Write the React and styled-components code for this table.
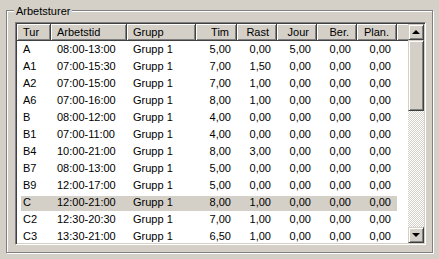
import React from "react";
import styled, { createGlobalStyle } from "styled-components";

const GlobalStyle = createGlobalStyle`
  html, body {
    margin: 0;
    padding: 0;
    background: #d4d0c8;
    font-family: "Liberation Sans", Arial, sans-serif;
    font-size: 11px;
    color: #000;
  }
  #root {
    width: 439px;
    height: 259px;
    overflow: hidden;
  }
`;

const COLS = [
  { key: "tur", title: "Tur", width: 34, align: "left" },
  { key: "tid", title: "Arbetstid", width: 76, align: "left" },
  { key: "grupp", title: "Grupp", width: 69, align: "left" },
  { key: "tim", title: "Tim", width: 41, align: "right" },
  { key: "rast", title: "Rast", width: 40, align: "right" },
  { key: "jour", title: "Jour", width: 40, align: "right" },
  { key: "ber", title: "Ber.", width: 40, align: "right" },
  { key: "plan", title: "Plan.", width: 40, align: "right" },
];

const rows = [
  ["A", "08:00-13:00", "Grupp 1", "5,00", "0,00", "5,00", "0,00", "0,00"],
  ["A1", "07:00-15:30", "Grupp 1", "7,00", "1,50", "0,00", "0,00", "0,00"],
  ["A2", "07:00-15:00", "Grupp 1", "7,00", "1,00", "0,00", "0,00", "0,00"],
  ["A6", "07:00-16:00", "Grupp 1", "8,00", "1,00", "0,00", "0,00", "0,00"],
  ["B", "08:00-12:00", "Grupp 1", "4,00", "0,00", "0,00", "0,00", "0,00"],
  ["B1", "07:00-11:00", "Grupp 1", "4,00", "0,00", "0,00", "0,00", "0,00"],
  ["B4", "10:00-21:00", "Grupp 1", "8,00", "3,00", "0,00", "0,00", "0,00"],
  ["B7", "08:00-13:00", "Grupp 1", "5,00", "0,00", "0,00", "0,00", "0,00"],
  ["B9", "12:00-17:00", "Grupp 1", "5,00", "0,00", "0,00", "0,00", "0,00"],
  ["C", "12:00-21:00", "Grupp 1", "8,00", "1,00", "0,00", "0,00", "0,00"],
  ["C2", "12:30-20:30", "Grupp 1", "7,00", "1,00", "0,00", "0,00", "0,00"],
  ["C3", "13:30-21:00", "Grupp 1", "6,50", "1,00", "0,00", "0,00", "0,00"],
];

const SELECTED = 9;

function App() {
  return (
    <>
      <GlobalStyle />
      <GroupBox>
        <GroupLabel>Arbetsturer</GroupLabel>
        <ListView>
          <Content>
            <Header>
              {COLS.map((c) => (
                <HeaderCell key={c.key} align={c.align}>
                  {c.title}
                </HeaderCell>
              ))}
              <HeaderCell />
            </Header>
            <Body>
              {rows.map((r, i) => (
                <Row key={r[0]} selected={i === SELECTED}>
                  {r.map((v, j) => (
                    <Cell key={j} align={COLS[j].align} first={j === 0}>
                      {v}
                    </Cell>
                  ))}
                </Row>
              ))}
            </Body>
          </Content>
          <ScrollBar>
            <ArrowButton>
              <Arrow up />
            </ArrowButton>
            <Thumb />
            <Track />
            <ArrowButton>
              <Arrow />
            </ArrowButton>
          </ScrollBar>
        </ListView>
      </GroupBox>
    </>
  );
}

const GroupBox = styled.div`
  position: relative;
  margin: 10px 0 0 6px;
  width: 427px;
  height: 243px;
  box-sizing: border-box;
  border: 1px solid #808080;
  box-shadow: inset 1px 1px 0 #fff, 1px 1px 0 #fff;
  padding: 11px 0 0 8px;
`;

const GroupLabel = styled.div`
  position: absolute;
  top: -6px;
  left: 7px;
  padding: 0 2px;
  line-height: 13px;
  background: #d4d0c8;
`;

const ListView = styled.div`
  display: flex;
  width: 411px;
  height: 223px;
  box-sizing: border-box;
  border: 1px solid;
  border-color: #808080 #fff #fff #808080;
  box-shadow: inset 1px 1px 0 #404040, inset -1px -1px 0 #d4d0c8;
  padding: 1px;
  background: #fff;
`;

const Content = styled.div`
  flex: 1;
  display: flex;
  flex-direction: column;
  overflow: hidden;
`;

const Header = styled.div`
  display: grid;
  grid-template-columns: ${COLS.map((c) => c.width + "px").join(" ")} 11px;
  height: 17px;
  flex-shrink: 0;
`;

const HeaderCell = styled.div`
  box-sizing: border-box;
  background: #d4d0c8;
  border-right: 1px solid #404040;
  border-bottom: 1px solid #404040;
  box-shadow: inset 1px 1px 0 #fff, inset -1px -1px 0 #808080;
  padding: 0 7px 0 6px;
  line-height: 16px;
  text-align: ${(p) => p.align || "left"};
  white-space: nowrap;
  overflow: hidden;
`;

const Body = styled.div`
  flex: 1;
  overflow: hidden;
`;

const Row = styled.div`
  display: grid;
  grid-template-columns: 30px ${COLS.slice(1)
      .map((c) => c.width + "px")
      .join(" ")};
  width: 376px;
  margin-left: 4px;
  height: 17px;
  line-height: 17px;
  background: ${(p) =>
    p.selected
      ? "linear-gradient(transparent 2px, #d4d0c8 2px)"
      : "transparent"};
`;

const Cell = styled.div`
  padding: ${(p) => (p.first ? "0 0 0 2px" : p.align === "right" ? "0 6px 0 0" : "0 0 0 6px")};
  text-align: ${(p) => p.align};
  white-space: nowrap;
  overflow: hidden;
`;

const ScrollBar = styled.div`
  width: 16px;
  display: flex;
  flex-direction: column;
  flex-shrink: 0;
`;

const raised = `
  box-sizing: border-box;
  background: #d4d0c8;
  border: 1px solid;
  border-color: #d4d0c8 #404040 #404040 #d4d0c8;
  box-shadow: inset 1px 1px 0 #fff, inset -1px -1px 0 #808080;
`;

const ArrowButton = styled.div`
  ${raised}
  height: 16px;
  display: flex;
  align-items: center;
  justify-content: center;
`;

const Arrow = styled.div`
  width: 0;
  height: 0;
  border-left: 4px solid transparent;
  border-right: 4px solid transparent;
  ${(p) => (p.up ? "border-bottom: 4px solid #000;" : "border-top: 4px solid #000;")}
`;

const Thumb = styled.div`
  ${raised}
  height: 71px;
`;

const Track = styled.div`
  flex: 1;
  background-color: #d4d0c8;
  background-image: conic-gradient(#fff 25%, #d4d0c8 0 50%, #fff 0 75%, #d4d0c8 0);
  background-size: 2px 2px;
`;

export default App;
